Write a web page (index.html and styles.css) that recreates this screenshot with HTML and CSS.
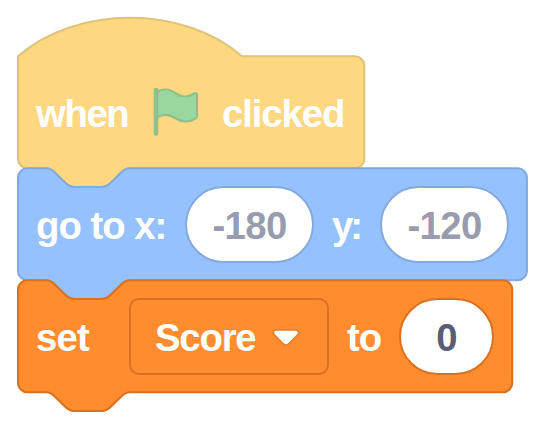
FILE: index.html
```html
<!DOCTYPE html>
<html lang="en">
<head>
<meta charset="utf-8">
<title>Blocks</title>
<link rel="stylesheet" href="styles.css">
</head>
<body>
<main class="stack">
  <section class="block event">
    <svg class="shape" viewBox="0 -0.12 48 48"><path d="M0,0 c25,-22 71,-22 96,0 H144.4 a4,4 0 0,1 4,4 v40 a4,4 0 0,1 -4,4 H48 c-2,0 -3,1 -4,2 l-4,4 c-1,1 -2,2 -4,2 h-12 c-2,0 -3,-1 -4,-2 l-4,-4 c-1,-1 -2,-2 -4,-2 H4 a4,4 0 0,1 -4,-4 z"/></svg>
    <span class="label when">when</span>
    <svg class="flag" viewBox="0 0 46 50"><path class="cloth" d="M3 5.500C10 1 17 2 23 6.500C29 10.500 36 10 41 6.500Q44 5 44 8V29Q44 30.500 42.500 31.500C36 36 28 35 22 31C15 26.500 9 27 3 31Z"/><path class="pole" d="M3 3V46.500"/></svg>
    <span class="label clicked">clicked</span>
  </section>
  <section class="block motion">
    <svg class="shape" viewBox="0 -0.12 48 48"><path d="M0,4 a4,4 0 0,1 4,-4 H12 c2,0 3,1 4,2 l4,4 c1,1 2,2 4,2 h12 c2,0 3,-1 4,-2 l4,-4 c1,-1 2,-2 4,-2 H214.100 a4,4 0 0,1 4,4 v40 a4,4 0 0,1 -4,4 H48 c-2,0 -3,1 -4,2 l-4,4 c-1,1 -2,2 -4,2 h-12 c-2,0 -3,-1 -4,-2 l-4,-4 c-1,-1 -2,-2 -4,-2 H4 a4,4 0 0,1 -4,-4 z"/></svg>
    <span class="label goto">go to x:</span>
    <span class="input">-180</span>
    <span class="label y">y:</span>
    <span class="input">-120</span>
  </section>
  <section class="block data">
    <svg class="shape" viewBox="0 -0.12 48 48"><path d="M0,4 a4,4 0 0,1 4,-4 H12 c2,0 3,1 4,2 l4,4 c1,1 2,2 4,2 h12 c2,0 3,-1 4,-2 l4,-4 c1,-1 2,-2 4,-2 H207.800 a4,4 0 0,1 4,4 v40 a4,4 0 0,1 -4,4 H48 c-2,0 -3,1 -4,2 l-4,4 c-1,1 -2,2 -4,2 h-12 c-2,0 -3,-1 -4,-2 l-4,-4 c-1,-1 -2,-2 -4,-2 H4 a4,4 0 0,1 -4,-4 z"/></svg>
    <span class="label set">set</span>
    <span class="dropdown"><span class="label score">Score</span><svg class="arrow" viewBox="0 0 30 20"><path d="M5.500 2H24.500C28 2 28.500 5 26.500 7L18 15.700Q15 18.700 12 15.700L3.500 7C1.500 5 2 2 5.500 2Z"/></svg></span>
    <span class="label to">to</span>
    <span class="input zero">0</span>
  </section>
</main>
</body>
</html>
```

FILE: styles.css
```css
body {
  margin: 0;
  background: #fff;
  font: bold 38.3px/44px "Liberation Sans", Arial, sans-serif;
}

.stack {
  box-sizing: border-box;
  height: 429px;
  padding: 56px 0 0 18px;
}

.block {
  position: relative;
  display: flex;
  align-items: center;
  height: 112px;
  color: #fff;
}

.shape {
  position: absolute;
  left: 0;
  top: 0;
  width: 112px;
  height: 112px;
  overflow: visible;
  stroke-width: 0.9;
}

.event .shape { fill: #fed781; stroke: #e0c27b; }
.motion .shape { fill: #96c1ff; stroke: #83a9df; }
.data .shape { fill: #ff8d2f; stroke: #db701f; }

.label {
  position: relative;
  flex: none;
  box-sizing: border-box;
  white-space: nowrap;
  padding-top: 4px;
}

.when { width: 135px; padding-left: 18px; letter-spacing: -1.4px; }
.clicked { padding-left: 1px; letter-spacing: -1.1px; }
.goto { width: 167px; padding-left: 18px; letter-spacing: -1px; }
.y { width: 66px; padding-left: 18px; letter-spacing: -3px; }
.set { width: 111px; padding-left: 18px; letter-spacing: -0.8px; }
.to { width: 70px; padding-left: 18px; letter-spacing: -1px; }
.score { width: 116px; letter-spacing: -1.2px; }

.flag {
  position: relative;
  flex: none;
  width: 46px;
  height: 50px;
  margin-right: 22px;
  overflow: visible;
}

.cloth {
  fill: #99d79f;
  stroke: #90c08d;
  stroke-width: 2.2;
}

.pole {
  stroke: #90c08d;
  stroke-width: 4.6;
  stroke-linecap: round;
}

.input {
  position: relative;
  flex: none;
  box-sizing: border-box;
  width: 129px;
  height: 77px;
  padding-top: 16px;
  border: 2px solid #83a9df;
  border-radius: 39px;
  background: #fff;
  color: #989cad;
  letter-spacing: -0.6px;
  text-align: center;
}

.zero {
  width: 95px;
  border-color: #db701f;
  color: #575e75;
}

.dropdown {
  position: relative;
  flex: none;
  display: flex;
  align-items: center;
  box-sizing: border-box;
  width: 200px;
  height: 77px;
  padding-left: 24px;
  border: 2px solid #db701f;
  border-radius: 10px;
}

.arrow {
  position: relative;
  top: 2px;
  width: 30px;
  height: 20px;
  fill: #fff;
  stroke: #e67e29;
  stroke-width: 1.7;
  overflow: visible;
}
```
